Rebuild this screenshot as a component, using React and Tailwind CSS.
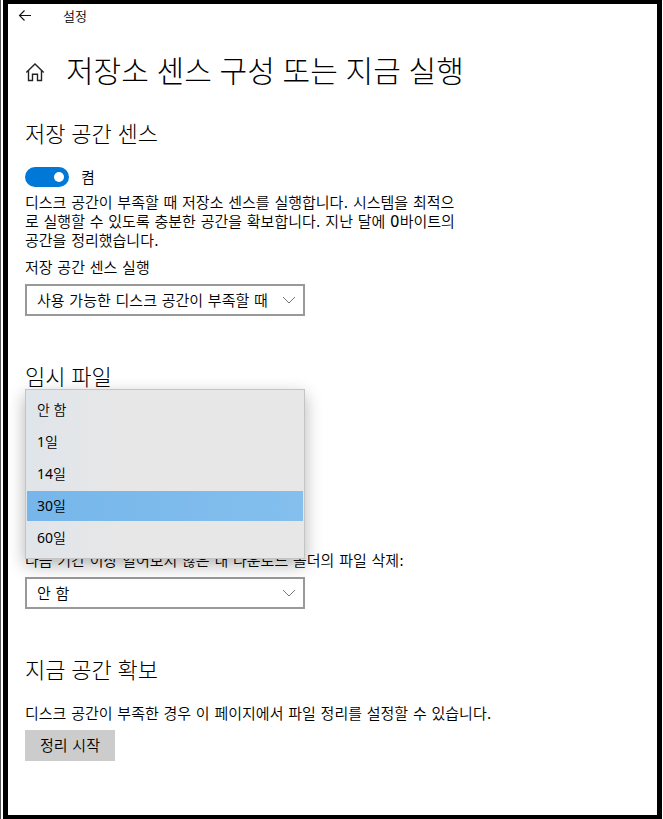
import { useState } from 'react';
import clsx from 'clsx';

const RUN_OPTIONS = ['사용 가능한 디스크 공간이 부족할 때', '매일', '매주', '매월'];
const PERIOD_OPTIONS = ['안 함', '1일', '14일', '30일', '60일'];

function BackIcon() {
  return (
    <svg width="14" height="12" viewBox="0 0 14 12" fill="none" stroke="#111" strokeWidth="1.1" aria-hidden="true">
      <path d="M13 5.5H1.5M6.5 0.5l-5 5 5 5" />
    </svg>
  );
}

function HomeIcon() {
  return (
    <svg width="20" height="20" viewBox="0 0 20 20" fill="none" stroke="#222" strokeWidth="1.4" aria-hidden="true">
      <path d="M1.3 10.4L10 2l8.7 8.4" />
      <path d="M3.5 8.6v9.9h4v-6.2h5v6.2h4V8.6" />
    </svg>
  );
}

function SectionTitle({ className, children }) {
  return (
    <h2
      className={clsx(
        'font-["Noto_Sans","Noto_Sans_CJK_KR",sans-serif] text-[22px] leading-7 font-light',
        className
      )}
    >
      {children}
    </h2>
  );
}

function SelectBox({ id, options, value, onChange }) {
  return (
    <div className="relative max-w-[280px]">
      <select
        id={id}
        value={value}
        onChange={(event) => onChange(event.target.value)}
        className="block h-8 w-full appearance-none border-2 border-[#999] bg-white pt-0.5 pr-7 pl-2.5 outline-none"
      >
        {options.map((option) => (
          <option key={option}>{option}</option>
        ))}
      </select>
      <svg
        width="14"
        height="8"
        viewBox="0 0 14 8"
        fill="none"
        stroke="#777"
        className="pointer-events-none absolute top-3 right-[9px]"
        aria-hidden="true"
      >
        <path d="M1 1l6 6 6-6" />
      </svg>
    </div>
  );
}

function PeriodList({ value, onSelect }) {
  return (
    <div
      role="listbox"
      aria-label="임시 파일"
      className="absolute -top-px left-0 z-10 w-full max-w-[280px] border border-[#c4c4c4] bg-linear-to-r from-[#e0e5ea] to-[#e7e7e7] to-35% pt-1 pb-1 shadow-[0_6px_16px_rgba(0,0,0,0.3)]"
    >
      {PERIOD_OPTIONS.map((option) => (
        <button
          key={option}
          type="button"
          role="option"
          aria-selected={option === value}
          onClick={() => onSelect(option)}
          className={clsx(
            'block h-8 w-full border border-transparent bg-clip-padding pl-2.5 text-left font-["Noto_Sans","Noto_Sans_CJK_KR_DemiLight","Noto_Sans_CJK_KR",sans-serif] text-sm',
            option === value && 'bg-linear-to-r from-[#76b6ea] to-[#84bfee]'
          )}
        >
          {option}
        </button>
      ))}
    </div>
  );
}

export default function App() {
  const [isOn, setIsOn] = useState(true);
  const [runWhen, setRunWhen] = useState(RUN_OPTIONS[0]);
  const [tempPeriod, setTempPeriod] = useState('30일');
  const [downloadPeriod, setDownloadPeriod] = useState('안 함');

  return (
    <div className='flex min-h-screen border-l border-[#555] bg-white pr-px pl-0.5 font-["DejaVu_Sans","Noto_Sans_CJK_KR_DemiLight","Noto_Sans_CJK_KR",sans-serif] text-[15px] leading-[19px] text-black'>
      <div className="min-w-0 flex-1 border-x-5 border-y-4 border-black">
        <header className="flex h-6 items-center pl-2.5">
          <button type="button" aria-label="뒤로">
            <BackIcon />
          </button>
          <span className="ml-[31px] text-[13px]">설정</span>
        </header>

        <main className="px-[17px] pb-10">
          <div className="mt-[23px] flex items-center">
            <a href="#home" aria-label="홈" className="pt-0.5">
              <HomeIcon />
            </a>
            <h1 className='ml-[21px] font-["Noto_Sans","Noto_Sans_CJK_KR",sans-serif] text-[30px] leading-10 font-light'>
              저장소 센스 구성 또는 지금 실행
            </h1>
          </div>

          <section>
            <SectionTitle className="mt-7">저장 공간 센스</SectionTitle>
            <label className="mt-5 flex h-5 items-center">
              <input
                type="checkbox"
                role="switch"
                checked={isOn}
                onChange={(event) => setIsOn(event.target.checked)}
                className="peer sr-only"
              />
              <span className="flex h-5 w-11 items-center justify-start rounded-full bg-[#999] px-[5px] peer-checked:justify-end peer-checked:bg-[#0078d7]">
                <span className="size-2.5 rounded-full bg-white" />
              </span>
              <span className="ml-3 pt-0.5">{isOn ? '켬' : '끔'}</span>
            </label>
            <p className="mt-[7px] max-w-[440px]">
              디스크 공간이 부족할 때 저장소 센스를 실행합니다. 시스템을 최적으로 실행할 수 있도록 충분한 공간을
              확보합니다. 지난 달에 0바이트의 공간을 정리했습니다.
            </p>
            <label htmlFor="run-when" className="mt-2 mb-1.5 block">
              저장 공간 센스 실행
            </label>
            <SelectBox id="run-when" options={RUN_OPTIONS} value={runWhen} onChange={setRunWhen} />
          </section>

          <section>
            <SectionTitle className="mt-[46px]">임시 파일</SectionTitle>
            <div className="relative h-[162px]">
              <PeriodList value={tempPeriod} onSelect={setTempPeriod} />
            </div>
            <label htmlFor="download-period" className="mb-1.5 block">
              다음 기간 이상 열어보지 않은 내 다운로드 폴더의 파일 삭제:
            </label>
            <SelectBox
              id="download-period"
              options={PERIOD_OPTIONS}
              value={downloadPeriod}
              onChange={setDownloadPeriod}
            />
          </section>

          <section>
            <SectionTitle className="mt-[46px]">지금 공간 확보</SectionTitle>
            <p className="mt-[22px]">디스크 공간이 부족한 경우 이 페이지에서 파일 정리를 설정할 수 있습니다.</p>
            <button type="button" className="mt-1.5 h-[31px] bg-[#ccc] px-[15px] pt-0.5">
              정리 시작
            </button>
          </section>
        </main>
      </div>
    </div>
  );
}
